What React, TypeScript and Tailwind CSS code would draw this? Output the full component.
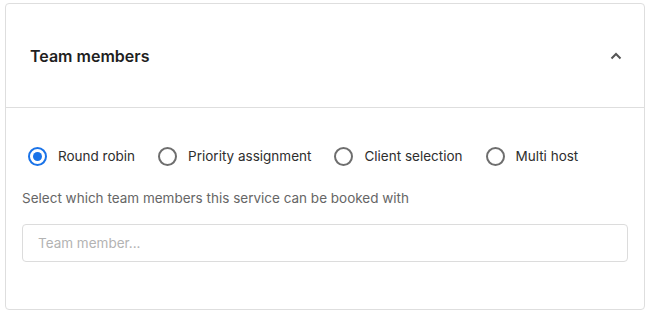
import React, { useState } from "react";

const options = ["Round robin", "Priority assignment", "Client selection", "Multi host"];

const Radio: React.FC<{ checked: boolean }> = ({ checked }) => (
  <span
    className={`flex h-[19px] w-[19px] shrink-0 items-center justify-center rounded-full border-2 ${
      checked ? "border-[#1a73e8]" : "border-[#6e6e6e]"
    }`}
  >
    {checked && <span className="h-[9px] w-[9px] rounded-full bg-[#1a73e8]" />}
  </span>
);

export default function App() {
  const [selected, setSelected] = useState(0);

  return (
    <div className="min-h-[316px] bg-white pl-[5px] pt-[3px] font-['Inter',sans-serif]">
      <div className="w-[640px] rounded-[4px] border border-[#dedede] bg-white">
        <div className="flex h-[104px] items-center justify-between border-b border-[#dedede] pl-6 pr-[22px]">
          <h2 className="text-[16px] font-semibold text-[#1f1f1f]">Team members</h2>
          <svg width="12" height="8" viewBox="0 0 12 8" fill="none">
            <path d="M1.5 6.5 L6 2 L10.5 6.5" stroke="#555" strokeWidth="2" />
          </svg>
        </div>
        <div className="px-4 pb-[47px] pt-[38px]">
          <div className="flex items-center gap-[23px] pl-[6px]">
            {options.map((opt, i) => (
              <button
                key={opt}
                onClick={() => setSelected(i)}
                className="flex h-5 items-center gap-[11px] text-[13.5px] text-[#2e2e2e]"
              >
                <Radio checked={selected === i} />
                {opt}
              </button>
            ))}
          </div>
          <p className="mt-[22px] text-[13.5px] leading-5 text-[#666]">
            Select which team members this service can be booked with
          </p>
          <input
            placeholder="Team member..."
            className="mt-4 h-[38px] w-[606px] rounded-[4px] border border-[#dcdcdc] px-[15px] text-[13.5px] text-[#333] outline-none placeholder:text-[#b3b3b3]"
          />
        </div>
      </div>
    </div>
  );
}
